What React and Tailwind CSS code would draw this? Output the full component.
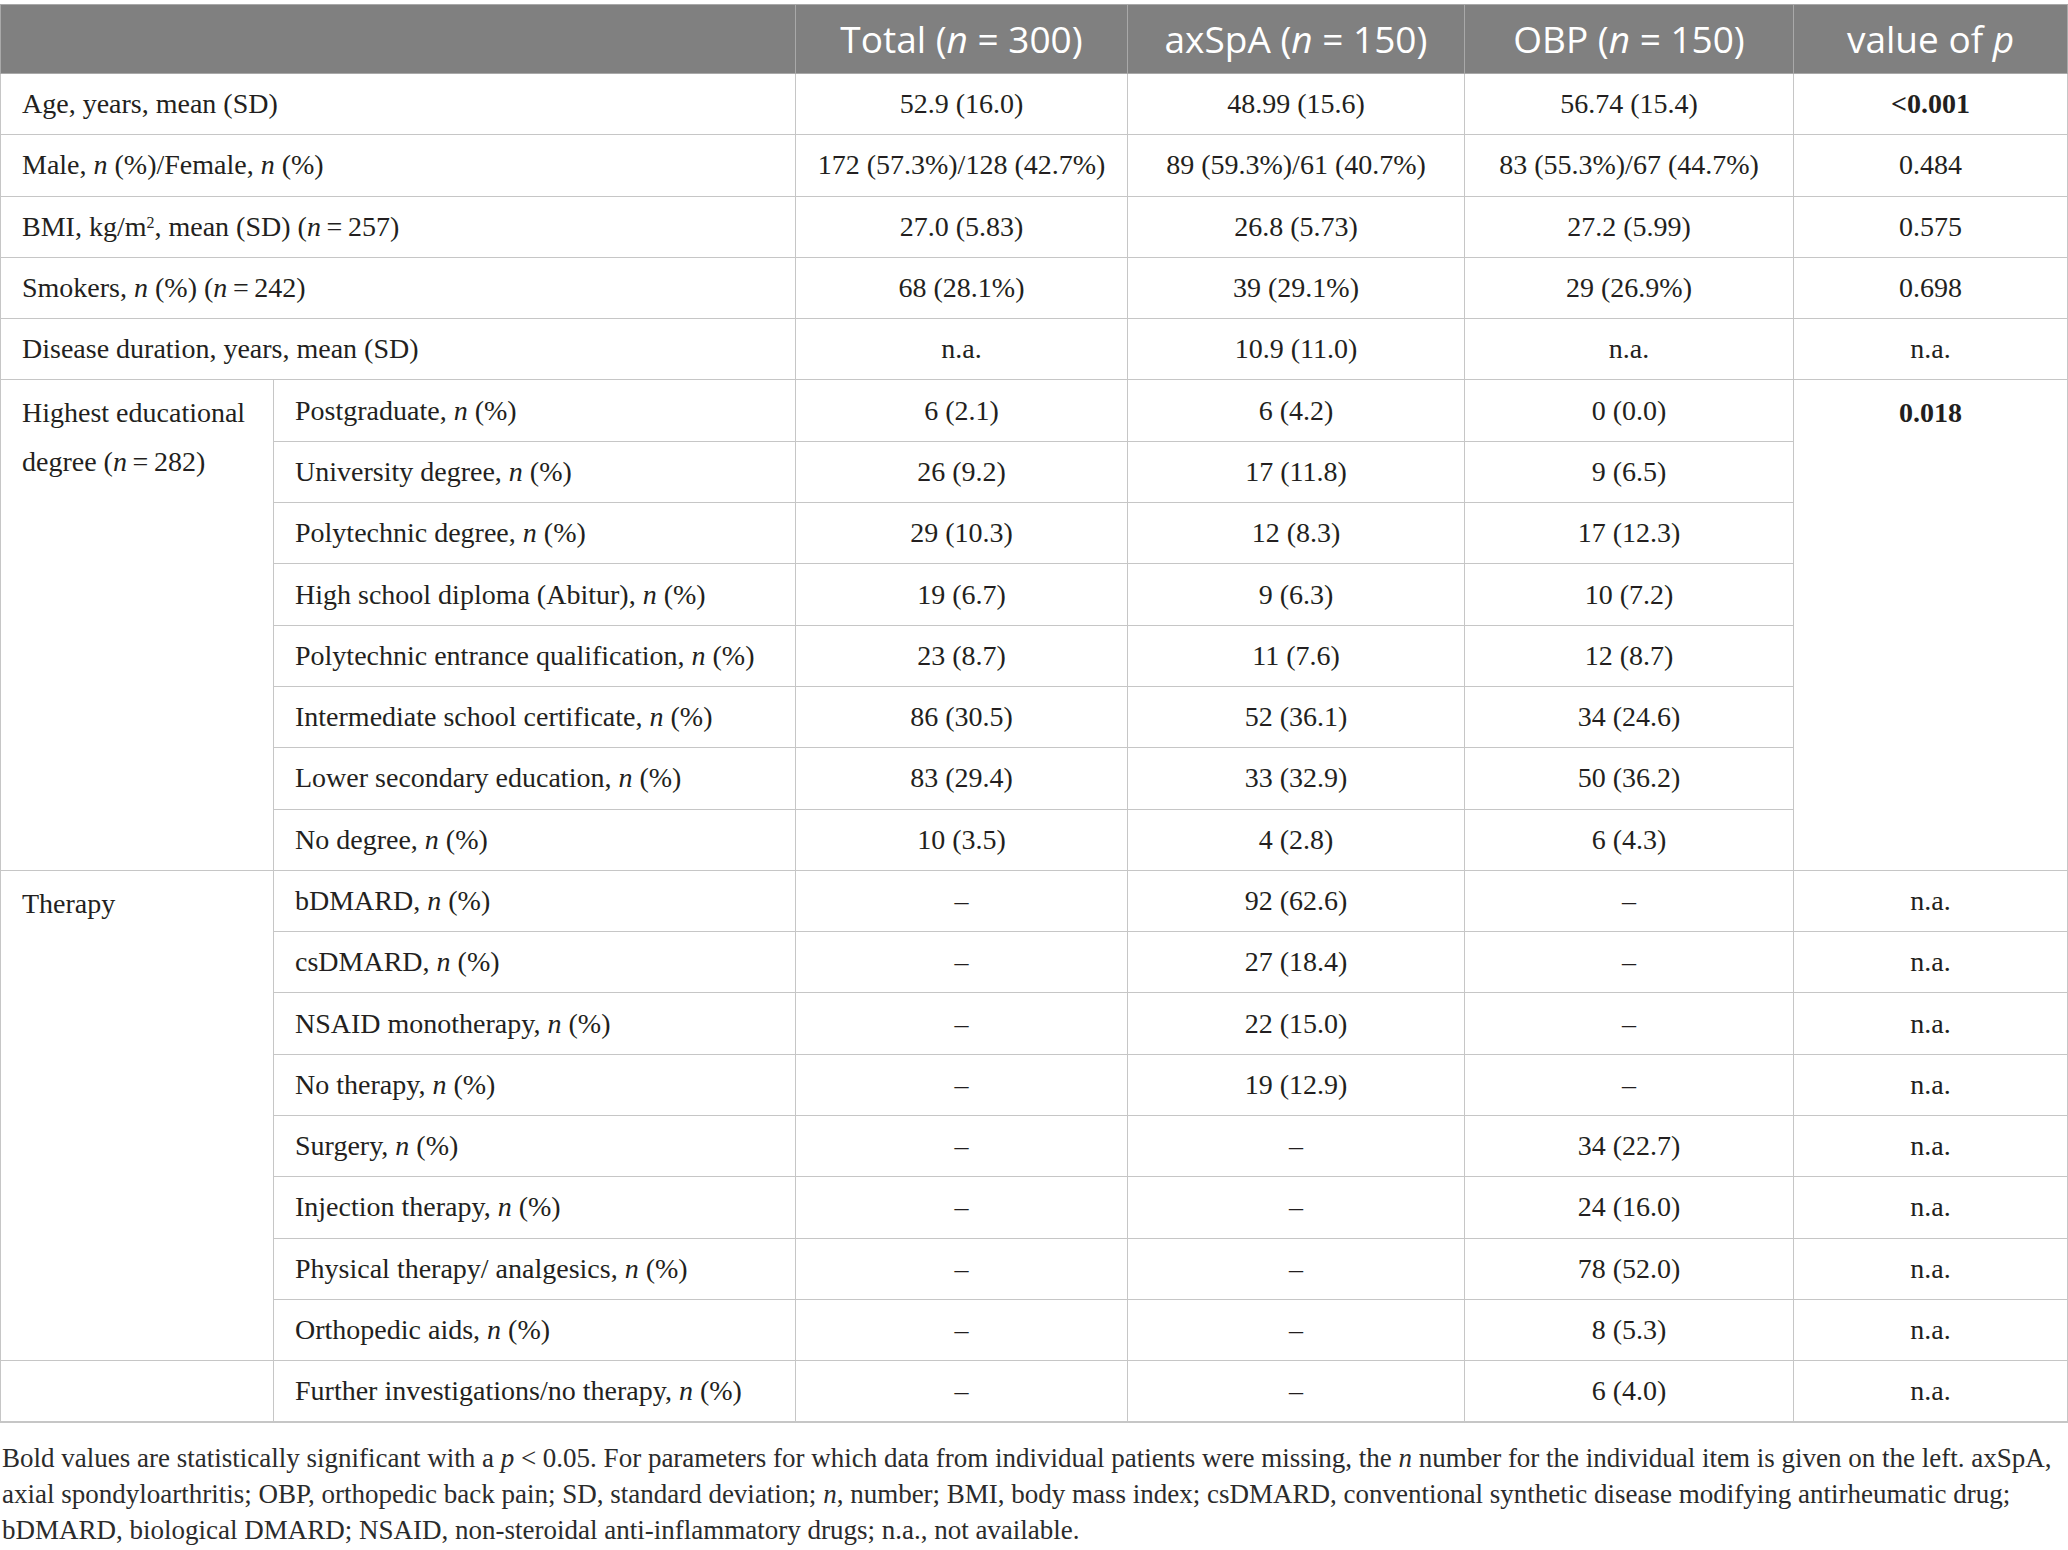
import React from 'react';

const N = () => <i>n</i>;

const top = [
  { label: <>Age, years, mean (SD)</>, vals: ['52.9 (16.0)', '48.99 (15.6)', '56.74 (15.4)'], p: '<0.001', bold: true },
  { label: <>Male, <N /> (%)/Female, <N /> (%)</>, vals: ['172 (57.3%)/128 (42.7%)', '89 (59.3%)/61 (40.7%)', '83 (55.3%)/67 (44.7%)'], p: '0.484' },
  { label: <>BMI, kg/m<sup className="text-[16px]">2</sup>, mean (SD) (<N />&thinsp;=&thinsp;257)</>, vals: ['27.0 (5.83)', '26.8 (5.73)', '27.2 (5.99)'], p: '0.575' },
  { label: <>Smokers, <N /> (%) (<N />&thinsp;=&thinsp;242)</>, vals: ['68 (28.1%)', '39 (29.1%)', '29 (26.9%)'], p: '0.698' },
  { label: <>Disease duration, years, mean (SD)</>, vals: ['n.a.', '10.9 (11.0)', 'n.a.'], p: 'n.a.' },
];

const education = [
  ['Postgraduate', '6 (2.1)', '6 (4.2)', '0 (0.0)'],
  ['University degree', '26 (9.2)', '17 (11.8)', '9 (6.5)'],
  ['Polytechnic degree', '29 (10.3)', '12 (8.3)', '17 (12.3)'],
  ['High school diploma (Abitur)', '19 (6.7)', '9 (6.3)', '10 (7.2)'],
  ['Polytechnic entrance qualification', '23 (8.7)', '11 (7.6)', '12 (8.7)'],
  ['Intermediate school certificate', '86 (30.5)', '52 (36.1)', '34 (24.6)'],
  ['Lower secondary education', '83 (29.4)', '33 (32.9)', '50 (36.2)'],
  ['No degree', '10 (3.5)', '4 (2.8)', '6 (4.3)'],
];

const therapy = [
  ['bDMARD', '–', '92 (62.6)', '–'],
  ['csDMARD', '–', '27 (18.4)', '–'],
  ['NSAID monotherapy', '–', '22 (15.0)', '–'],
  ['No therapy', '–', '19 (12.9)', '–'],
  ['Surgery', '–', '–', '34 (22.7)'],
  ['Injection therapy', '–', '–', '24 (16.0)'],
  ['Physical therapy/ analgesics', '–', '–', '78 (52.0)'],
  ['Orthopedic aids', '–', '–', '8 (5.3)'],
];

const td = 'border border-[#c6c6c6] h-[61.3px] px-[21px] py-0 align-middle';
const num = 'border border-[#c6c6c6] h-[61.3px] px-2 py-0 text-center align-middle';
const th = 'border border-[#a9a9a9] h-[69px] text-center font-normal';
const spanCell = 'border border-[#c6c6c6] pt-[8px] align-top leading-[49px]';

export default function App() {
  return (
    <div className="bg-white pt-[4px] text-[#231f20]" style={{ fontFamily: '"Liberation Serif", "Times New Roman", serif' }}>
      <table className="w-[2067px] border-collapse table-fixed text-[28px] leading-[40px] border-b-2 border-b-[#c6c6c6]">
        <colgroup>
          <col className="w-[273px]" />
          <col className="w-[522px]" />
          <col className="w-[332px]" />
          <col className="w-[337px]" />
          <col className="w-[329px]" />
          <col className="w-[274px]" />
        </colgroup>
        <thead>
          <tr className="bg-[#808080] text-white text-[37px] font-['Open_Sans',sans-serif]">
            <th className={th} colSpan={2}></th>
            <th className={th}>Total (<i>n</i> = 300)</th>
            <th className={th}>axSpA (<i>n</i> = 150)</th>
            <th className={th}>OBP (<i>n</i> = 150)</th>
            <th className={th}>value of <i>p</i></th>
          </tr>
        </thead>
        <tbody>
          {top.map((r, i) => (
            <tr key={i}>
              <td className={td} colSpan={2}>{r.label}</td>
              {r.vals.map((v, j) => (
                <td key={j} className={num}>{v}</td>
              ))}
              <td className={`${num} ${r.bold ? 'font-bold' : ''}`}>{r.p}</td>
            </tr>
          ))}

          {education.map((r, i) => (
            <tr key={r[0]}>
              {i === 0 && (
                <td className={`${spanCell} px-[21px]`} rowSpan={8}>
                  <span className="block">Highest educational</span>
                  <span className="block">degree (<N />&thinsp;=&thinsp;282)</span>
                </td>
              )}
              <td className={td}>{r[0]}, <N /> (%)</td>
              <td className={num}>{r[1]}</td>
              <td className={num}>{r[2]}</td>
              <td className={num}>{r[3]}</td>
              {i === 0 && (
                <td className={`${spanCell} text-center font-bold`} rowSpan={8}>
                  0.018
                </td>
              )}
            </tr>
          ))}

          {therapy.map((r, i) => (
            <tr key={r[0]}>
              {i === 0 && (
                <td className={`${spanCell} px-[21px]`} rowSpan={8}>
                  Therapy
                </td>
              )}
              <td className={td}>{r[0]}, <N /> (%)</td>
              <td className={num}>{r[1]}</td>
              <td className={num}>{r[2]}</td>
              <td className={num}>{r[3]}</td>
              <td className={num}>n.a.</td>
            </tr>
          ))}

          <tr>
            <td className={td}></td>
            <td className={td}>Further investigations/no therapy, <N /> (%)</td>
            <td className={num}>–</td>
            <td className={num}>–</td>
            <td className={num}>6 (4.0)</td>
            <td className={num}>n.a.</td>
          </tr>
        </tbody>
      </table>

      {/* table footnote */}
      <div className="pl-[2px] pr-4 pt-[17px] text-[27px] leading-[36px] text-[#2b2b2b] whitespace-nowrap">
        <p>
          Bold values are statistically significant with a <i>p</i> &lt; 0.05. For parameters for which data from individual patients were missing, the <i>n</i> number for the individual item is given on the left. axSpA,
        </p>
        <p>
          axial spondyloarthritis; OBP, orthopedic back pain; SD, standard deviation; <i>n</i>, number; BMI, body mass index; csDMARD, conventional synthetic disease modifying antirheumatic drug;
        </p>
        <p>bDMARD, biological DMARD; NSAID, non-steroidal anti-inflammatory drugs; n.a., not available.</p>
      </div>
    </div>
  );
}
